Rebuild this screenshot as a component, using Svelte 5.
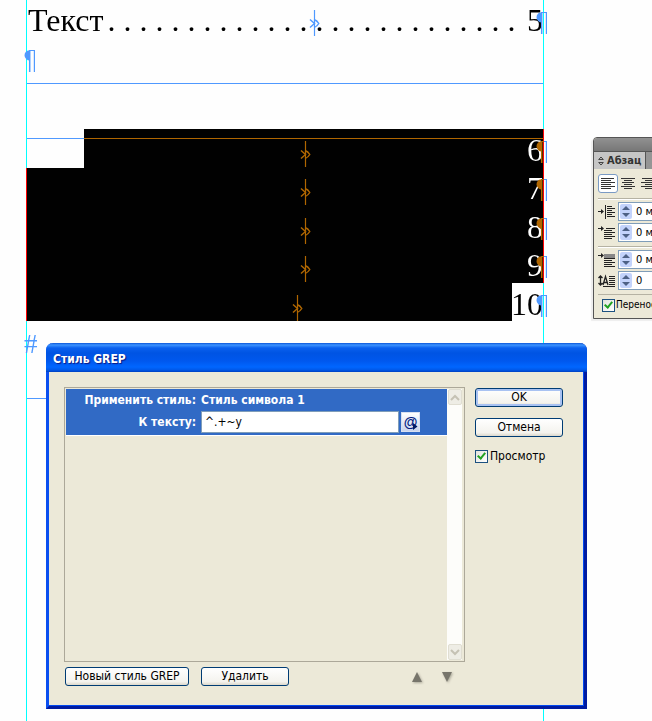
<script>
  let preview = $state(true);
  let hyphenate = $state(true);
  let pattern = $state('^.+~y');

  const leader = Array(26).fill('.').join(' ');
  const pages = ['6', '7', '8', '9', '10'];
  const alignments = [
    { name: 'По левому краю', path: 'M0 .5H13M0 2.5H10M0 4.5H14M0 6.5H10M0 8.5H14M0 10.5H10' },
    { name: 'По центру', path: 'M0 .5H14M3 2.5H11M1 4.5H13M3 6.5H11M0 8.5H14M3 10.5H11' },
    { name: 'По правому краю', path: 'M1 .5H14M4 2.5H14M0 4.5H14M4 6.5H14M0 8.5H14M4 10.5H14' }
  ];
</script>

{#snippet pilcrow()}
  <svg class="pilcrow" width="12" height="22" viewBox="0 0 12 22" aria-hidden="true">
    <path d="M5.500 0H11V1H5.500ZM6 0A5.500 5.300 0 0 0 6 10.600Z" fill="currentColor" />
    <path d="M5.700 0V22" stroke="currentColor" stroke-width="1.500" />
    <path d="M10.400 0V22" stroke="currentColor" stroke-width="1.200" />
  </svg>
{/snippet}

{#snippet tabmark()}
  <svg class="tabmark" width="12" height="26" viewBox="0 0 12 26" fill="none" stroke="currentColor" aria-hidden="true">
    <path d="M5.500 0V26" stroke-width="1.200" />
    <path d="M1 9.500L5.500 13.500L1 17.500M5 9.500Q8 10.500 9.800 13.500Q8 16.500 5 17.500" stroke-width="1.400" />
  </svg>
{/snippet}

{#snippet spin()}
  <svg class="spin" width="12" height="15" viewBox="0 0 12 15" aria-hidden="true">
    <rect width="12" height="15" rx="2" fill="#c3d3fb" />
    <path d="M2 6L6 2L10 6ZM2 9L6 13L10 9Z" fill="#4d6185" />
  </svg>
{/snippet}

<main class="desk">
  <section class="frame" aria-label="Текстовый фрейм">
    <div class="rule r1"></div>
    <div class="rule r2"></div>
    <div class="rule r3"></div>
    <div class="line">
      <span>Текст</span><span class="leader">{leader}</span><span class="num">5</span>
      <i class="end">{@render pilcrow()}</i>
      <i class="tab first">{@render tabmark()}</i>
    </div>
    <div class="line blank"><i class="start">{@render pilcrow()}</i></div>
    <div class="toc">
      {#each pages as page}
        <div class="line">
          <span class="num">{page}</span>
          <i class="end">{@render pilcrow()}</i>
          <i class="tab" class:wide={page.length > 1}>{@render tabmark()}</i>
        </div>
      {/each}
      <div class="selection"></div>
    </div>
    <div class="hash">#</div>
  </section>

  <aside class="palette">
    <div class="grip"></div>
    <div class="tabs">
      <div class="tabname">
        <svg width="6" height="10" viewBox="0 0 6 10" fill="none" stroke="#444"><path d="M.7 3.500L3 1L5.300 3.500ZM.7 6.500L3 9L5.300 6.500Z" /></svg>
        Абзац
      </div>
    </div>
    <div class="aligns">
      {#each alignments as item, i}
        <button class:active={i === 0} aria-label={item.name}>
          <svg width="14" height="11" viewBox="0 0 14 11" stroke="#333"><path d={item.path} /></svg>
        </button>
      {/each}
    </div>
    <div class="group">
      <label class="field">
        <svg width="18" height="14" viewBox="0 0 18 14" fill="none" stroke="#222"><path d="M0 6.500H5M7.500 0V14M9 1.500H14M9 3.500H17M9 5.500H14M9 7.500H17M9 9.500H14M9 11.500H17" /><path d="M3 4L6 6.500L3 9Z" fill="#222" stroke="none" /></svg>
        <span class="box">{@render spin()}<input value="0 мм" aria-label="Отступ слева" /></span>
      </label>
      <label class="field">
        <svg width="18" height="14" viewBox="0 0 18 14" fill="none" stroke="#222"><path d="M0 2.500H5M8 2.500H17M6 4.500H14M6 6.500H17M6 8.500H14M6 10.500H17M6 12.500H14" /><path d="M3 0L6 2.500L3 5Z" fill="#222" stroke="none" /></svg>
        <span class="box">{@render spin()}<input value="0 мм" aria-label="Отступ первой строки" /></span>
      </label>
    </div>
    <div class="group">
      <label class="field">
        <svg width="18" height="14" viewBox="0 0 18 14" fill="none" stroke="#222"><rect x="6" y="1" width="11" height="4" fill="#888" stroke="none" /><path d="M0 2.500H5M6 5.500H17M6 7.500H14M6 9.500H17M6 11.500H14M6 13.500H17" /><path d="M3 0L6 2.500L3 5Z" fill="#222" stroke="none" /></svg>
        <span class="box">{@render spin()}<input value="0 мм" aria-label="Интервал перед" /></span>
      </label>
      <label class="field">
        <svg width="18" height="14" viewBox="0 0 18 14" fill="none" stroke="#222"><path d="M2.500 2V11M.5 4L2.500 2L4.500 4M.5 9L2.500 11L4.500 9M5 11L7.500 2.500L10 11M6 8.500H9" stroke-width="1.300" /><path d="M11 2.500H17M11 4.500H17M11 6.500H17M11 8.500H17M11 10.500H17M5 12.500H17" /></svg>
        <span class="box">{@render spin()}<input value="0" aria-label="Буквица" /></span>
      </label>
    </div>
    <label class="check">
      <input type="checkbox" bind:checked={hyphenate} />
      Перенос
    </label>
  </aside>

  <div class="dialog" role="dialog" aria-labelledby="dialog-title">
    <h1 id="dialog-title">Стиль GREP</h1>
    <div class="content">
      <div class="left">
        <div class="list">
          <div class="items">
            <div class="item">
              <span class="key">Применить стиль:</span><span>Стиль символа 1</span>
              <label class="key" for="pattern">К тексту:</label>
              <span class="entry">
                <input id="pattern" type="text" bind:value={pattern} />
                <button class="at" aria-label="Специальные символы">
                  <span>@</span>
                  <svg width="5" height="7" viewBox="0 0 5 7"><path d="M0 0L4.500 3.500L0 7Z" fill="#001a66" /></svg>
                </button>
              </span>
            </div>
          </div>
          <div class="scroll">
            <button aria-label="Вверх"><svg width="10" height="7" viewBox="0 0 10 7" fill="none" stroke="#c5c2b4" stroke-width="2"><path d="M1 6L5 2L9 6" /></svg></button>
            <button aria-label="Вниз"><svg width="10" height="7" viewBox="0 0 10 7" fill="none" stroke="#c5c2b4" stroke-width="2"><path d="M1 1L5 5L9 1" /></svg></button>
          </div>
        </div>
        <div class="actions">
          <button class="btn new">Новый стиль GREP</button>
          <button class="btn">Удалить</button>
          <span class="move">
            <button aria-label="Переместить вверх"><svg width="10" height="10" viewBox="0 0 10 10"><path d="M5 0L10 10H0Z" fill="#77756b" /></svg></button>
            <button aria-label="Переместить вниз"><svg width="10" height="10" viewBox="0 0 10 10"><path d="M0 0H10L5 10Z" fill="#77756b" /></svg></button>
          </span>
        </div>
      </div>
      <div class="side">
        <button class="btn default">OK</button>
        <button class="btn">Отмена</button>
        <label class="check">
          <input type="checkbox" bind:checked={preview} />
          Просмотр
        </label>
      </div>
    </div>
  </div>
</main>

<style>
  :global(body) { margin: 0; background: #fefefe; }
  .desk {
    position: relative;
    min-height: 100vh;
    overflow: hidden;
    background: #fefefe;
    font: 12px/16px "DejaVu Sans Condensed", "DejaVu Sans", sans-serif;
    color: #000;
  }
  button, input { font: inherit; color: inherit; box-sizing: border-box; margin: 0; }
  button { padding: 0; border: 0; background: none; }
  svg { display: block; }

  .frame {
    position: absolute;
    left: 26px;
    top: 0;
    bottom: 0;
    width: 516px;
    border: solid #0ff;
    border-width: 0 1px;
    font: 32px/40px "Liberation Serif", serif;
    isolation: isolate;
    background: #fefefe;
  }
  .rule { position: absolute; left: 0; right: 0; height: 1px; background: #4f99ff; }
  .r1 { top: 83px; }
  .r2 { top: 138px; }
  .r3 { top: 398px; }
  .line { position: relative; display: flex; height: 38px; padding-left: 1px; }
  .num { margin-left: auto; }
  .leader { margin-left: 4px; white-space: nowrap; }
  .blank { margin-bottom: 53px; }
  .toc { position: relative; display: grid; grid-template-rows: repeat(5, 1fr); height: 192px; line-height: 42px; }
  .toc .line { height: auto; min-height: 0; }
  .toc .num { height: 38px; }
  .end, .start, .tab { position: absolute; color: #4f99ff; }
  .end { right: -5px; top: 12px; }
  .start { left: -3px; top: 12px; }
  .tab { left: 273px; top: 12px; }
  .tab.wide { left: 265px; }
  .tab.first { left: 282px; top: 10px; }
  .selection {
    position: absolute;
    inset: 0 -1px;
    background: #fff;
    mix-blend-mode: difference;
    clip-path: polygon(58px 0, 100% 0, 100% 154px, 486px 154px, 486px 100%, 0 100%, 0 39px, 58px 39px);
  }
  .hash { position: absolute; left: -3px; top: 331px; font-size: 27px; line-height: 26px; color: #4f99ff; }

  .palette {
    position: absolute;
    left: 593px;
    right: -8px;
    top: 137px;
    height: 180px;
    border: 1px solid #555;
    border-radius: 4px 0 0 0;
    background: #ece9d8;
    box-shadow: -2px 2px 1px #eee;
    font-size: 11px;
  }
  .grip { height: 13px; background: linear-gradient(#919191, #777); border-radius: 3px 0 0 0; }
  .tabs { height: 17px; background: #959595; border-top: 1px solid #555; display: flex; }
  .tabname {
    display: flex;
    align-items: center;
    gap: 3px;
    width: 47px;
    padding-left: 4px;
    background: #c6c6c6;
    border-right: 1px solid #555;
    font: bold 11px/17px "DejaVu Sans Condensed", sans-serif;
    color: #333;
  }
  .aligns { display: flex; gap: 0; padding: 5px 0 5px 4px; }
  .aligns button { width: 20px; height: 19px; display: grid; place-items: center; border-radius: 3px; }
  .aligns .active { background: #fff; border: 1px solid #7a9ac4; }
  .group { border-top: 1px solid #b5b2a3; box-shadow: inset 0 1px #fff; margin-left: 4px; padding: 3px 0 4px; display: grid; gap: 2px; }
  .field { display: flex; align-items: center; gap: 2px; height: 19px; }
  .box { display: flex; align-items: center; height: 17px; width: 60px; padding-left: 1px; border: 1px solid #7f9db9; background: #fff; }
  .box input { width: 44px; border: 0; padding: 0 0 0 4px; background: none; }
  .palette .check { border-top: 1px solid #b5b2a3; margin-left: 4px; padding: 2px 0 0 4px; gap: 1px; font-size: 10px; }

  .check { display: flex; align-items: center; gap: 2px; white-space: nowrap; }
  .check input {
    appearance: none;
    flex: none;
    width: 13px;
    height: 13px;
    border: 1px solid #1c5180;
    background: linear-gradient(135deg, #e2e2dc, #fff);
    position: relative;
  }
  .check input:checked::after {
    content: "";
    position: absolute;
    left: 3px;
    top: 0;
    width: 3px;
    height: 6px;
    border: solid #21a121;
    border-width: 0 2px 2px 0;
    transform: rotate(40deg);
  }

  .dialog {
    position: absolute;
    left: 46px;
    top: 343px;
    width: 541px;
    box-sizing: border-box;
    border: solid #0a3fdf;
    border-width: 0 3px 3px;
    border-color: #0a3fdf #001ba0 #001ba0 #0a4ff0;
    border-radius: 7px 7px 0 0;
    background: #ece9d8;
    box-shadow: inset -1px -1px #0048f0;
  }
  h1 {
    margin: 0 -3px;
    height: 29px;
    padding-left: 7px;
    border-radius: 7px 7px 0 0;
    background: linear-gradient(#0a55d8 0, #3c93ff 2px, #0a60ee 5px, #0054e3 10px, #0058ee 18px, #0066ff 24px, #0058e8 27px, #0040c0);
    color: #fff;
    font: bold 12px/32px "DejaVu Sans Condensed", sans-serif;
    text-shadow: 1px 1px 1px #0a1883;
  }
  .content { display: flex; gap: 10px; padding: 15px 21px 20px 15px; }
  .left { flex: 1; min-width: 0; }
  .list { display: flex; height: 275px; box-sizing: border-box; border: 1px solid #aca899; padding: 1px 2px 1px 1px; }
  .items { flex: 1; }
  .item {
    display: grid;
    grid-template-columns: 130px 1fr;
    column-gap: 5px;
    row-gap: 3px;
    padding: 3px 0 2px;
    background: #316ac5;
    border-bottom: 1px solid #fff;
    color: #fff;
    font-weight: bold;
    white-space: nowrap;
    align-items: center;
  }
  .key { text-align: right; }
  .entry { display: flex; gap: 2px; }
  .entry input { width: 198px; height: 22px; padding: 0 3px; border: 1px solid #7f9db9; background: #fff; color: #000; font-weight: normal; }
  .at { position: relative; width: 19px; height: 20px; margin-top: 1px; background: linear-gradient(#fff, #c8d4ee); border: 1px solid #d8e0f0; color: #001a80; font: bold 14px/16px "Liberation Sans", sans-serif; }
  .at svg { position: absolute; right: 1px; bottom: 1px; }
  .scroll { width: 15px; background: #fdfdfa; display: flex; flex-direction: column; justify-content: space-between; align-items: center; }
  .scroll button { width: 14px; height: 16px; display: grid; place-items: center; background: #eeede5; border: 1px solid #e0ded2; border-radius: 2px; }
  .actions { display: flex; align-items: center; gap: 12px; margin-top: 5px; padding-left: 1px; }
  .btn {
    width: 88px;
    height: 19px;
    border: 1px solid #003c74;
    border-radius: 3px;
    background: linear-gradient(#fff, #f4f3ee 80%, #dcd8cc);
    line-height: 17px;
    white-space: nowrap;
  }
  .btn.new { width: 124px; }
  .btn.default { box-shadow: inset 0 0 0 2px #a9c2f2; }
  .move { margin: 0 13px 0 auto; display: flex; gap: 20px; filter: drop-shadow(1px 1px 1px #aaa899); }
  .side { width: 88px; display: grid; gap: 11px; align-content: start; padding-top: 1px; }
</style>
